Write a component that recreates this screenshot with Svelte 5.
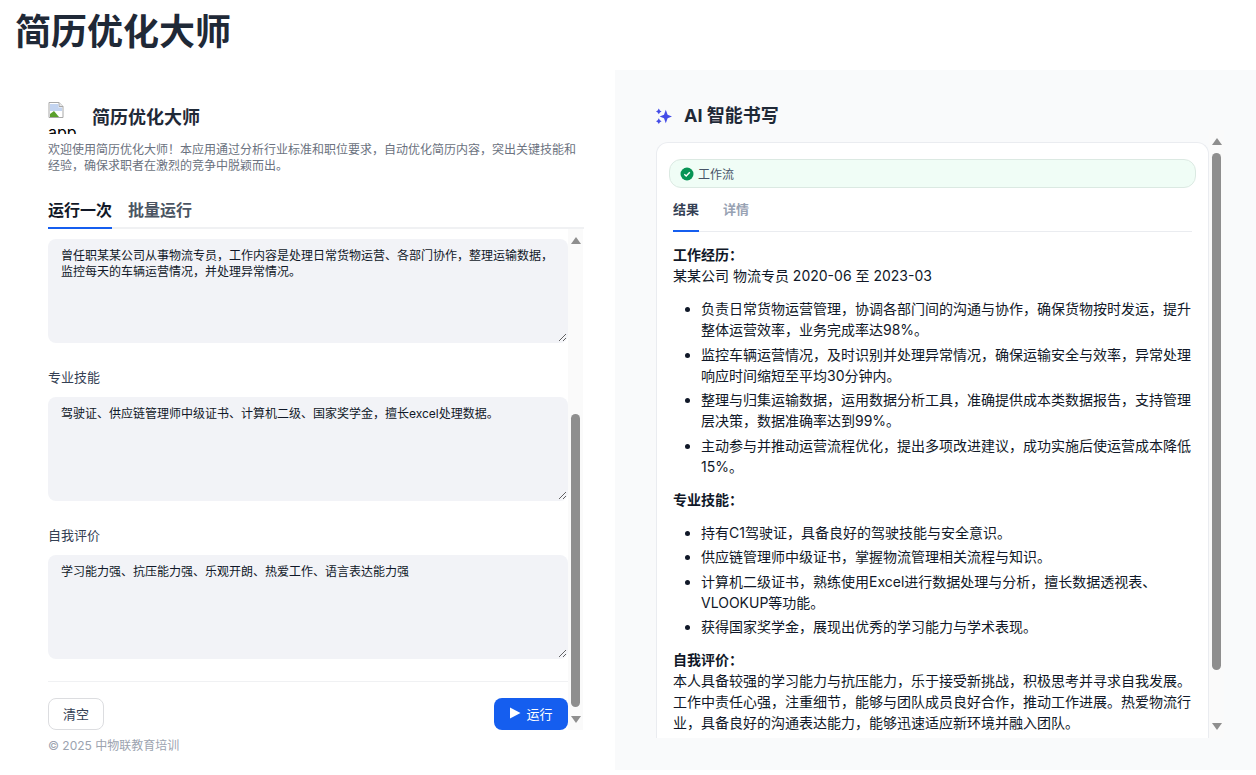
<script>
  const experience = '曾任职某某公司从事物流专员，工作内容是处理日常货物运营、各部门协作，整理运输数据，监控每天的车辆运营情况，并处理异常情况。';
  const skills = '驾驶证、供应链管理师中级证书、计算机二级、国家奖学金，擅长excel处理数据。';
  const review = '学习能力强、抗压能力强、乐观开朗、热爱工作、语言表达能力强';
  const work = [
    '负责日常货物运营管理，协调各部门间的沟通与协作，确保货物按时发运，提升整体运营效率，业务完成率达98%。',
    '监控车辆运营情况，及时识别并处理异常情况，确保运输安全与效率，异常处理响应时间缩短至平均30分钟内。',
    '整理与归集运输数据，运用数据分析工具，准确提供成本类数据报告，支持管理层决策，数据准确率达到99%。',
    '主动参与并推动运营流程优化，提出多项改进建议，成功实施后使运营成本降低15%。'
  ];
  const skillList = [
    '持有C1驾驶证，具备良好的驾驶技能与安全意识。',
    '供应链管理师中级证书，掌握物流管理相关流程与知识。',
    '计算机二级证书，熟练使用Excel进行数据处理与分析，擅长数据透视表、VLOOKUP等功能。',
    '获得国家奖学金，展现出优秀的学习能力与学术表现。'
  ];
</script>

<h1 class="page-title">简历优化大师</h1>

<main class="layout">
  <section class="left">
    <div class="app-head">
      <div class="broken">
        <svg width="16" height="16" viewBox="0 0 16 16">
          <path d="M1 .5h10l4 4v11H1z" fill="#fff" stroke="#a8a8a8"/>
          <path d="M11 .5v4h4" fill="#e8e8e8" stroke="#a8a8a8"/>
          <path d="M2 2h8.500v3.500H14V9H2z" fill="#c3d4f0"/>
          <path d="M2 15V12l4-3 5 6z" fill="#5aa02c"/>
        </svg>
        <span class="alt">app</span>
      </div>
      <h2>简历优化大师</h2>
    </div>
    <p class="intro">欢迎使用简历优化大师！本应用通过分析行业标准和职位要求，自动优化简历内容，突出关键技能和经验，确保求职者在激烈的竞争中脱颖而出。</p>

    <div class="tabs">
      <span class="tab active">运行一次</span>
      <span class="tab">批量运行</span>
    </div>

    <div class="scroll-wrap">
      <div class="form">
        <textarea class="field first" readonly value={experience}></textarea>
        <label class="label" for="skills">专业技能</label>
        <textarea id="skills" class="field" readonly value={skills}></textarea>
        <label class="label" for="review">自我评价</label>
        <textarea id="review" class="field" readonly value={review}></textarea>
        <div class="actions">
          <button class="btn-clear">清空</button>
          <button class="btn-run">
            <svg width="12" height="12" viewBox="0 0 12 12"><path d="M1 .5 11.500 6 1 11.500z" fill="#fff"/></svg>
            运行
          </button>
        </div>
      </div>
      <div class="bar bar-left">
        <span class="arrow up"></span>
        <div class="track"><span class="thumb"></span></div>
        <span class="arrow down"></span>
      </div>
    </div>
    <p class="copy">© 2025 中物联教育培训</p>
  </section>

  <section class="right">
    <div class="right-head">
      <svg width="16" height="16" viewBox="0 0 16 16" fill="#444ce7">
        <path d="M9.800 1.800 11.600 6.700 16 8.500 11.600 10.300 9.800 15.200 8 10.300 3.600 8.500 8 6.700z"/>
        <path d="M2.800 .6 3.900 2.400 5.600 3.400 3.900 4.400 2.800 6.200 1.700 4.400 0 3.400 1.700 2.400z"/>
        <path d="M2.800 10.300 3.900 12.200 5.600 13.200 3.900 14.200 2.800 16 1.700 14.200 0 13.200 1.700 12.200z"/>
      </svg>
      <h2>AI 智能书写</h2>
    </div>
    <div class="result-wrap">
      <div class="card">
        <div class="flow">
          <svg width="14" height="14" viewBox="0 0 14 14">
            <circle cx="7" cy="7" r="6.500" fill="#079455"/>
            <path d="M4.300 7.200 6.200 9 9.800 5.300" fill="none" stroke="#fff" stroke-width="1.400"/>
          </svg>
          工作流
        </div>
        <div class="result-tabs">
          <span class="rtab active">结果</span>
          <span class="rtab">详情</span>
        </div>
        <div class="content">
          <p><strong>工作经历：</strong><br />某某公司 物流专员 2020-06 至 2023-03</p>
          <ul>{#each work as item}<li>{item}</li>{/each}</ul>
          <p><strong>专业技能：</strong></p>
          <ul>{#each skillList as item}<li>{item}</li>{/each}</ul>
          <p><strong>自我评价：</strong><br />本人具备较强的学习能力与抗压能力，乐于接受新挑战，积极思考并寻求自我发展。工作中责任心强，注重细节，能够与团队成员良好合作，推动工作进展。热爱物流行业，具备良好的沟通表达能力，能够迅速适应新环境并融入团队。</p>
        </div>
      </div>
      <div class="bar bar-right">
        <span class="arrow up"></span>
        <div class="track"><span class="thumb"></span></div>
        <span class="arrow down"></span>
      </div>
    </div>
  </section>
</main>

<style>
  :global(body) {
    margin: 0;
    background: #fff;
    font-family: Inter, "Noto Sans CJK SC", sans-serif;
    color: #101828;
  }
  .page-title {
    margin: 0;
    height: 70px;
    padding-left: 15px;
    box-sizing: border-box;
    font-size: 36px;
    line-height: 64px;
    font-weight: 700;
    color: #1f2937;
  }
  .layout {
    display: grid;
    grid-template-columns: 615px 1fr;
    height: 700px;
  }
  .left {
    padding: 32px 31px 0 48px;
    min-width: 0;
  }
  .app-head {
    display: flex;
    align-items: center;
    gap: 12px;
    height: 32px;
  }
  .broken {
    width: 32px;
    height: 32px;
    flex: none;
    overflow: hidden;
    font-size: 16px;
    line-height: 16px;
    color: #000;
  }
  .broken svg { display: block; }
  .alt { display: block; margin-top: 6px; white-space: nowrap; font-family: Inter, sans-serif; }
  .app-head h2 {
    margin: 0;
    font-size: 18px;
    line-height: 28px;
    font-weight: 700;
    color: #1f2937;
  }
  .intro {
    margin: 8px 0 0;
    width: 530px;
    font-size: 12px;
    line-height: 16px;
    color: #6b7280;
  }
  .tabs {
    display: flex;
    gap: 16px;
    margin-top: 16px;
    border-bottom: 2px solid #f0f1f3;
    height: 39px;
    box-sizing: border-box;
  }
  .tab {
    font-size: 16px;
    font-weight: 700;
    line-height: 24px;
    padding-top: 8px;
    color: #4b5563;
    border-bottom: 2px solid transparent;
    height: 37px;
    box-sizing: border-box;
  }
  .tab.active {
    color: #111827;
    border-bottom-color: #155eef;
    height: 39px;
  }
  .scroll-wrap {
    display: flex;
    height: 501px;
  }
  .form {
    width: 520px;
    flex: none;
    overflow: hidden;
    padding-top: 10px;
    box-sizing: border-box;
  }
  .field {
    display: block;
    width: 100%;
    height: 104px;
    box-sizing: border-box;
    margin: 0;
    padding: 8px 12px;
    border: 1px solid transparent;
    border-radius: 8px;
    background: #f2f3f7;
    font: 12px/16px Inter, "Noto Sans CJK SC", sans-serif;
    color: #101828;
    resize: vertical;
    outline: none;
  }
  .label {
    display: block;
    height: 54px;
    line-height: 68px;
    font-size: 13px;
    color: #344054;
    box-sizing: border-box;
  }
  .actions {
    display: flex;
    justify-content: space-between;
    margin-top: 22px;
    padding-top: 16px;
    border-top: 1px solid #f0f1f3;
  }
  .actions button {
    height: 32px;
    box-sizing: border-box;
    border-radius: 8px;
    padding: 0 0 2px;
    font: 13px Inter, "Noto Sans CJK SC", sans-serif;
  }
  .btn-clear {
    width: 56px;
    background: #fff;
    border: 1px solid #dcdde0;
    color: #344054;
  }
  .btn-run {
    width: 74px;
    background: #155eef;
    border: 0;
    color: #fff;
    display: flex;
    align-items: center;
    justify-content: center;
    gap: 5px;
  }
  .bar {
    flex: none;
    width: 15px;
    background: #fafafa;
    display: flex;
    flex-direction: column;
    align-items: center;
    box-sizing: border-box;
  }
  .track {
    flex: 1;
    width: 9px;
    display: flex;
    flex-direction: column;
  }
  .thumb {
    display: block;
    width: 9px;
    background: #8e8e8e;
    border-radius: 5px;
  }
  .arrow {
    flex: none;
    width: 0;
    height: 0;
    border-left: 5px solid transparent;
    border-right: 5px solid transparent;
  }
  .arrow.up { border-bottom: 7px solid #8e8e8e; }
  .arrow.down { border-top: 7px solid #8e8e8e; }
  .bar-left { padding: 8px 0 7px; }
  .bar-left .track { padding: 170px 0 8px; box-sizing: border-box; }
  .bar-left .thumb { height: 293px; }
  .copy {
    margin: 8px 0 0;
    font-size: 12px;
    line-height: 16px;
    color: #9ca3af;
  }
  .right {
    background: #f9fafb;
    padding: 32px 32px 0 41px;
    min-width: 0;
  }
  .right-head {
    display: flex;
    align-items: center;
    gap: 12px;
    height: 28px;
  }
  .right-head svg { flex: none; }
  .right-head h2 {
    margin: 0;
    font-size: 18px;
    line-height: 28px;
    font-weight: 700;
    color: #1f2937;
  }
  .result-wrap {
    display: flex;
    height: 608px;
  }
  .card {
    width: 553px;
    flex: none;
    box-sizing: border-box;
    margin-top: 12px;
    padding: 16px 12px 0;
    background: #fff;
    border: 1px solid #eaecf0;
    border-bottom: 0;
    border-radius: 12px 12px 0 0;
    overflow: hidden;
  }
  .flow {
    display: flex;
    align-items: center;
    gap: 4px;
    height: 29px;
    box-sizing: border-box;
    padding-left: 10px;
    background: #f0fdf6;
    border: 1px solid #dbe9e2;
    border-radius: 12px;
    font-size: 12px;
    color: #475467;
  }
  .result-tabs {
    display: flex;
    gap: 24px;
    margin: 0 4px;
    height: 44px;
    box-sizing: border-box;
    border-bottom: 1px solid #eaecf0;
  }
  .rtab {
    font-size: 13px;
    font-weight: 600;
    line-height: 20px;
    padding-top: 11px;
    height: 44px;
    box-sizing: border-box;
    color: #98a2b3;
  }
  .rtab.active {
    color: #344054;
    border-bottom: 2px solid #155eef;
  }
  .content {
    margin: 12px 4px 0;
    width: 519px;
    font-size: 14px;
    line-height: 21px;
    color: #101828;
  }
  .content p { margin: 0; }
  .content strong { font-weight: 600; }
  .content ul {
    margin: 12px 0;
    padding-left: 28px;
  }
  .content li { margin-bottom: 3.500px; }
  .content li:last-child { margin-bottom: 0; }
  .bar-right { padding: 8px 0; }
  .bar-right .track { padding: 8px 0 53px; box-sizing: border-box; }
  .bar-right .thumb { height: 517px; }
</style>
